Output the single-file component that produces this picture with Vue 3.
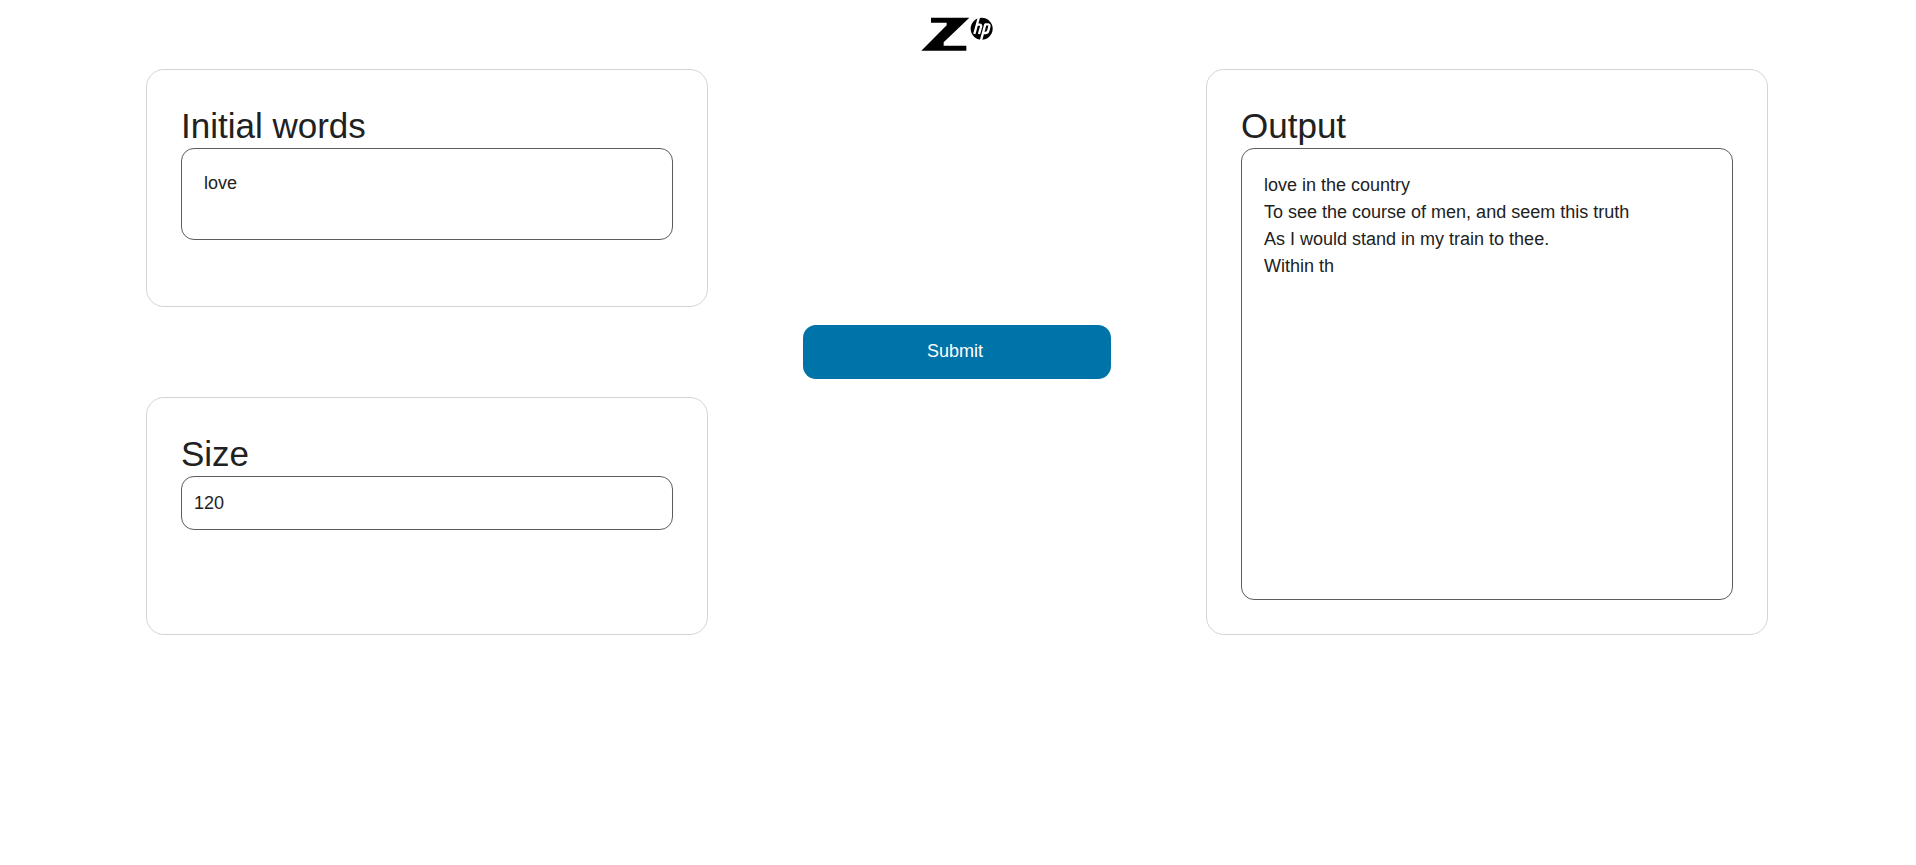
<script setup>
import { ref } from 'vue'

const words = ref('love')
const size = ref('120')
const output = ref(
  'love in the country\nTo see the course of men, and seem this truth\nAs I would stand in my train to thee.\nWithin th'
)
</script>

<template>
  <div class="page">
    <header class="header">
      <svg class="logo" viewBox="0 0 216 102" role="img" aria-label="Z by HP">
        <polygon points="30,2 145,2 68,76 68,86 136,86 136,101 1,101 77,25 77,17 30,17" />
        <circle cx="182" cy="35" r="33" />
        <g class="mark">
          <path d="M174 0 L160 51 M168 23 H176 Q182 23 180 30 L174 51" />
          <path d="M180 70 L193 22 M191 22 H200 Q207 22 205 29 L202 41 Q200 48 194 48 H187" />
        </g>
      </svg>
    </header>
    <main class="layout">
      <div class="inputs">
        <section class="card">
          <label class="title" for="words">Initial words</label>
          <textarea id="words" v-model="words" class="field words" spellcheck="false"></textarea>
        </section>
        <section class="card">
          <label class="title" for="size">Size</label>
          <input id="size" v-model="size" class="field size" type="text" inputmode="numeric" />
        </section>
      </div>
      <div class="action">
        <button class="submit" type="button">Submit</button>
      </div>
      <section class="card">
        <label class="title" for="output">Output</label>
        <textarea id="output" v-model="output" class="field output" readonly spellcheck="false"></textarea>
      </section>
    </main>
  </div>
</template>

<style>
body {
  margin: 0;
  background: #fff;
}
</style>

<style scoped>
.page,
.page * {
  box-sizing: border-box;
}
.page {
  font-family: "Liberation Sans", Arial, sans-serif;
  font-size: 18px;
  color: #212121;
  padding: 0 148px 0 146px;
}
.header {
  display: flex;
  justify-content: center;
  padding: 17px 0 18px;
}
.logo {
  display: block;
  width: 72px;
  height: 34px;
  fill: #000;
}
.mark {
  fill: none;
  stroke: #fff;
  stroke-width: 7;
}
.layout {
  display: grid;
  grid-template-columns: 281fr 249fr 281fr;
  min-height: 566px;
}
.inputs {
  display: grid;
  grid-template-rows: 1fr 1fr;
  gap: 90px;
}
.card {
  display: flex;
  flex-direction: column;
  padding: 34px;
  border: 1px solid #d4d4d4;
  border-radius: 18px;
}
.title {
  font-size: 35px;
  line-height: 44px;
}
.field {
  display: block;
  width: 100%;
  margin: 0;
  border: 1px solid #5c5c5c;
  border-radius: 13px;
  background: transparent;
  color: inherit;
  font: inherit;
  line-height: 27px;
  resize: none;
  outline: none;
}
.words {
  height: 92px;
  padding: 21px 22px;
}
.size {
  height: 54px;
  padding: 0 12px;
}
.output {
  flex: 1;
  padding: 23px 22px;
}
.action {
  display: flex;
  align-items: center;
  padding: 0 95px;
}
.submit {
  width: 100%;
  height: 54px;
  padding: 0 4px 2px 0;
  border: 0;
  border-radius: 13px;
  background: #0073a8;
  color: #fff;
  font: inherit;
  cursor: pointer;
}
</style>
